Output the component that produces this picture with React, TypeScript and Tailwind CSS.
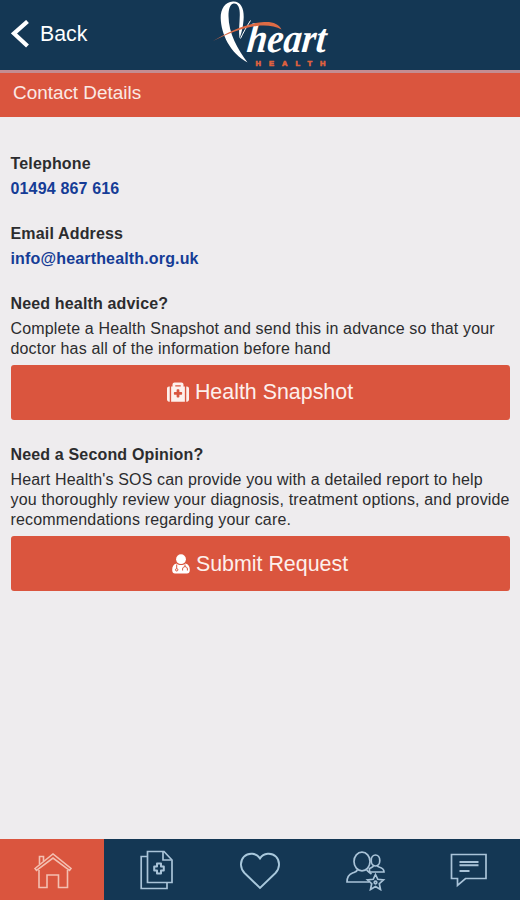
import React from "react";
import { FaMedkit } from "react-icons/fa";

function Logo() {
  return (
    <svg className="absolute left-[210px] top-0" width="120" height="70" viewBox="210 0 120 70">
      <path
        d="M233 1.500C225 2 220.500 9 220.700 18C221 34 230 53 247.500 62.500C238 50 228.500 33 228.500 16C228.500 9 230 4.500 233.500 3.600C238 3 240 8 239.800 15C239.600 24 238.500 31 239.500 38.500C241.500 34 243.500 25 243.700 17C243.900 8 240.500 1.200 233 1.500Z"
        fill="#fff"
      />
      <path d="M240.500 38.500C243 33 247 26 250.500 20.500" fill="none" stroke="#fff" strokeWidth="1" />
      <g transform="translate(246 52) skewX(-6) scale(0.850 1.080)">
        <text
          x="0"
          y="0"
          fill="#fff"
          fontFamily="'Liberation Serif', serif"
          fontStyle="italic"
          fontWeight="700"
          fontSize="38"
          textLength="93"
          lengthAdjust="spacingAndGlyphs"
        >
          heart
        </text>
      </g>
      <path d="M213 41C230 30.500 250 22.500 264 22C273 21.500 279 24 281.500 29.500C276 26 268 25 260 25.500C243 27.500 230 33 213 41Z" fill="#dd6b45" />
      <text
        x="255.500"
        y="65.600"
        fill="#df613f"
        stroke="#df613f"
        strokeWidth="0.700"
        fontFamily="'Liberation Sans', sans-serif"
        fontWeight="700"
        fontSize="7.500"
        textLength="70"
        lengthAdjust="spacing"
      >
        HEALTH
      </text>
    </svg>
  );
}

function DoctorIcon() {
  return (
    <svg width="18" height="20" viewBox="0 0 18 20">
      <circle cx="9" cy="5.200" r="4.900" fill="#fff" />
      <path d="M4.500 9.500C1.500 10 .2 12.500 .2 16C.2 18.500 1.300 19.400 3 19.400H15C16.700 19.400 17.800 18.500 17.800 16C17.800 12.500 16.500 10 13.500 9.500C11 11.500 7 11.500 4.500 9.500Z" fill="#fff" />
      <g fill="none" stroke="#da553e" strokeWidth="1">
        <path d="M4.700 10.500V14.500M13 10.500V12.800M10.600 16.500V15C10.600 11.900 15.400 11.900 15.400 15V16.500" />
        <circle cx="4.700" cy="15.800" r="1.200" />
      </g>
    </svg>
  );
}

function HomeIcon() {
  return (
    <svg className="absolute left-[34px] top-[14px]" width="38" height="38" viewBox="0 0 38 38" fill="none" stroke="#f3bfb1" strokeWidth="1.600">
      <path d="M5 17V34.500H13V22H24.500V34.500H33.500V17" />
      <path d="M1 15.500L19 1L37 15.500L35.500 17.500L19 5L2.500 17.500Z" />
      <path d="M5.500 11.500V3.500H9.500V8.300" />
    </svg>
  );
}

function FilesIcon() {
  return (
    <svg className="absolute left-[36px] top-[11px]" width="34" height="41" viewBox="0 0 34 41" fill="none" stroke="#a9c3d8" strokeWidth="1.700">
      <path d="M7.500 1.500H24L32 10V32.500H7.500Z" />
      <path d="M23 1.800V10H31.500M7.500 6.500H1.200V38.500H27V33" />
      <path d="M17 13.500H21V16.500H23.800V20.500H21V23.500H17V20.500H14.200V16.500H17Z" strokeWidth="2" strokeLinejoin="round" />
    </svg>
  );
}

function HeartIcon() {
  return (
    <svg className="absolute left-[32px] top-[13px]" width="40" height="38" viewBox="0 0 40 38" fill="none" stroke="#a9c8dc" strokeWidth="1.900">
      <path d="M20 6.500C16.500 .8 8.500 .2 4 4.700C-.5 9.500 .3 16.500 4.500 21L20 36L35.500 21C39.700 16.500 40.500 9.500 36 4.700C31.500 .2 23.500 .8 20 6.500Z" />
    </svg>
  );
}

function PeopleIcon() {
  return (
    <svg className="absolute left-[34px] top-[12px]" width="40" height="40" viewBox="0 0 40 40" fill="none" stroke="#a9c3d8" strokeWidth="1.700">
      <ellipse cx="16" cy="10.500" rx="8" ry="9.300" />
      <path d="M11.500 18.500C11 21 9 21 6.500 22C2.500 23.500 1 26 1 31H23M20.500 18.500C21 20 22 20.500 25.500 23" />
      <ellipse cx="29.500" cy="9.500" rx="4.300" ry="5.500" />
      <path d="M27.500 14.500C27.500 16 25.500 16.500 23.500 17.500V21H38C38 17.500 35 16.500 33 16C31.700 15.700 31.500 15.500 31.500 14.500" />
      <path d="M29.500 23.500L31.800 28.300L37.500 28.900L33.300 32.700L34.500 38.500L29.500 35.500L24.500 38.500L25.700 32.700L21.500 28.900L27.200 28.300Z" />
      <circle cx="29.500" cy="31.500" r="1.300" />
    </svg>
  );
}

function ChatIcon() {
  return (
    <svg className="absolute left-[34px] top-[14px]" width="38" height="36" viewBox="0 0 38 36" fill="none" stroke="#a9c3d8" strokeWidth="1.700">
      <path d="M1.500 1.500H36V25.500H15.500L7.500 32.500V25.500H1.500Z" />
      <path d="M9.500 9H28.500M9.500 12.300H28.500M9.500 18H19.500" strokeWidth="2" />
    </svg>
  );
}

const tabs = [HomeIcon, FilesIcon, HeartIcon, PeopleIcon, ChatIcon];

export default function App() {
  return (
    <div className="flex h-[900px] w-[520px] flex-col overflow-hidden bg-[#eeecee] font-['Liberation_Sans',sans-serif] text-[#2c2c2e]">
      <header className="relative flex h-[70px] shrink-0 items-center bg-[#143754] pb-[2px] pl-[11px] text-white">
        <svg width="18" height="28" viewBox="0 0 18 28" fill="none" stroke="#fff" strokeWidth="4.200">
          <path d="M16.500 1.500L3 13.500L16.500 26" />
        </svg>
        <span className="ml-[11px] text-[21.300px] leading-7">Back</span>
        <Logo />
      </header>
      <div className="flex h-[47px] shrink-0 items-center border-t-[3px] border-[#c48d91] bg-[#da553e] pb-[3px] pl-[13px] text-[18.900px] text-[#fbe9e4]">
        Contact Details
      </div>
      <main className="flex grow flex-col px-[10.500px] pt-[34px] text-[16px] tracking-[0.160px]">
        <h2 className="h-[25px] font-bold leading-[25px]">Telephone</h2>
        <a className="h-[25px] font-bold leading-[25px] text-[#153c96]">01494 867 616</a>
        <h2 className="mt-[20px] h-[25px] font-bold leading-[25px]">Email Address</h2>
        <a className="h-[25px] font-bold leading-[25px] text-[#153c96]">info@hearthealth.org.uk</a>
        <h2 className="mt-[20px] h-[28px] font-bold leading-[26px]">Need health advice?</h2>
        <p className="whitespace-nowrap leading-[20.300px]">
          Complete a Health Snapshot and send this in advance so that your
          <br />
          doctor has all of the information before hand
        </p>
        <button className="mt-[5px] flex h-[55px] shrink-0 items-center justify-center gap-1.5 rounded-[3px] bg-[#da553e] text-[21.400px] tracking-normal text-[#fdf0ec]">
          <FaMedkit className="size-[22px]" />
          <span>Health Snapshot</span>
        </button>
        <h2 className="mt-[22px] h-[28px] font-bold leading-[26px]">Need a Second Opinion?</h2>
        <p className="whitespace-nowrap leading-[20.300px]">
          Heart Health's SOS can provide you with a detailed report to help
          <br />
          you thoroughly review your diagnosis, treatment options, and provide
          <br />
          recommendations regarding your care.
        </p>
        <button className="mt-[6px] flex h-[55px] shrink-0 items-center justify-center gap-1.5 rounded-[3px] bg-[#da553e] text-[21.400px] tracking-normal text-[#fdf0ec]">
          <DoctorIcon />
          <span>Submit Request</span>
        </button>
      </main>
      <nav className="grid h-[61px] shrink-0 grid-cols-5 bg-[#143754]">
        {tabs.map((Icon, i) => (
          <div key={i} className={i === 0 ? "relative bg-[#da553e]" : "relative"}>
            <Icon />
          </div>
        ))}
      </nav>
    </div>
  );
}
